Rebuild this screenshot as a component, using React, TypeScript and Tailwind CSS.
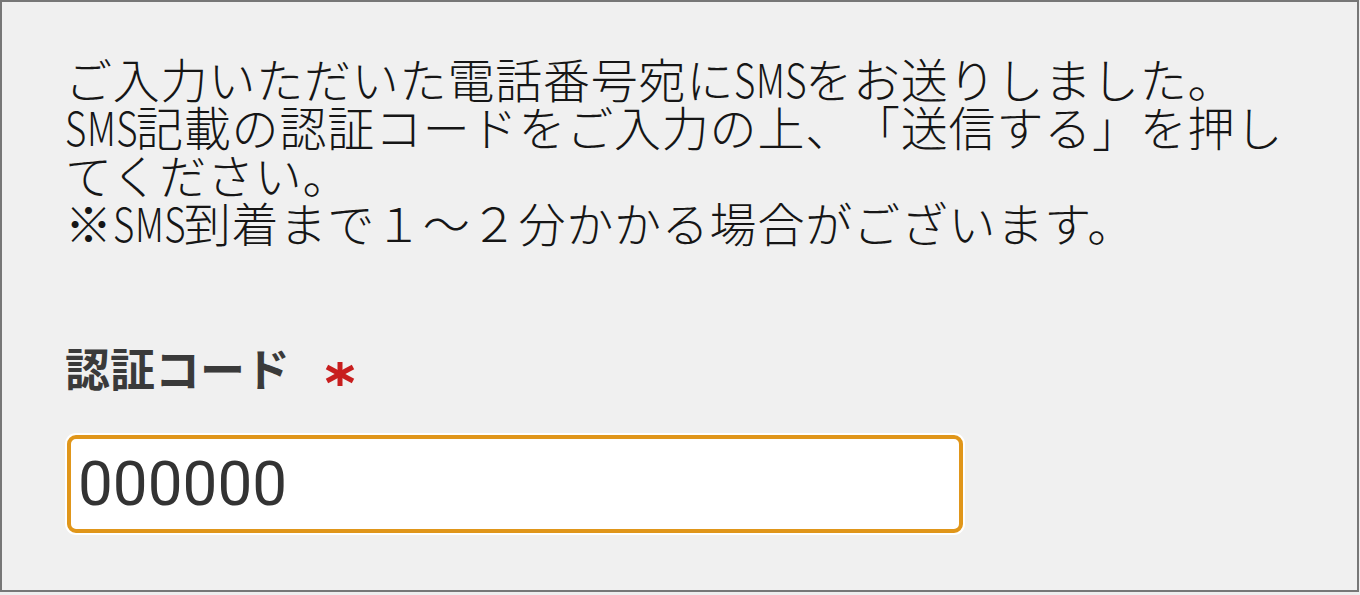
const jp = { fontFamily: '"Noto Sans CJK JP", "Noto Sans", sans-serif' };

function Sms() {
    // the reference draws the Latin letters in a narrow face
    return (
        <span className="inline-block w-[71px] whitespace-nowrap align-baseline">
            <span className="inline-block origin-left scale-x-[0.78]">SMS</span>
        </span>
    );
}

export default function App() {
    return (
        <div className="w-[1360px] h-[595px] bg-[#eeeeee] overflow-hidden">
            <div className="w-[1359px] h-[592px] border-2 border-[#777777] bg-[#f0f0f0] pl-[63px] pt-[52px]">
                <p
                    className="text-[47px] leading-[48px] font-light text-[#161616] tracking-[0.8px] [text-spacing-trim:space-all]"
                    style={jp}
                >
                    ご入力いただいた電話番号宛に<Sms />をお送りしました。
                    <br />
                    <Sms />記載の認証コードをご入力の上、「送信する」を押し
                    <br />
                    てください。
                    <br />
                    ※<Sms />到着まで１～２分かかる場合がございます。
                </p>

                <div className="mt-[98px] flex items-center gap-[35px]">
                    <span className="text-[45px] leading-[48px] font-bold text-[#3a3a3a]" style={jp}>
                        認証コード
                    </span>
                    <svg width="30" height="24" viewBox="0 0 30 24" className="mt-[12px]">
                        <g stroke="#c81e1e" strokeWidth="5" strokeLinecap="butt">
                            <line x1="15" y1="0" x2="15" y2="24" />
                            <line x1="2" y1="5" x2="28" y2="19" />
                            <line x1="2" y1="19" x2="28" y2="5" />
                        </g>
                    </svg>
                </div>

                <div className="mt-[43px] ml-[2px] w-[896px] h-[98px] rounded-[9px] border-4 border-[#e0961a] bg-white ring-2 ring-white flex items-center pl-[7px]">
                    <span
                        className="text-[62px] leading-none text-[#333333]"
                        style={{ fontFamily: 'Roboto, "Noto Sans", sans-serif' }}
                    >
                        000000
                    </span>
                </div>
            </div>
        </div>
    );
}
